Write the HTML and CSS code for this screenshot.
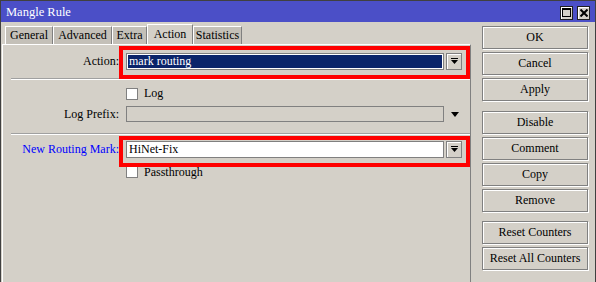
FILE: index.html
```html
<!DOCTYPE html>
<html lang="en">
<head>
    <meta charset="UTF-8">
    <meta name="viewport" content="width=device-width, initial-scale=1.0">
    <title>Mangle Rule</title>
    <link rel="stylesheet" href="styles.css">
</head>
<body>
    <div class="window">
        <div class="titlebar">
            <span class="title">Mangle Rule</span>
            <div class="wbtns">
                <span class="wbtn">
                    <svg width="9" height="9" viewBox="0 0 9 9"><rect x="0.5" y="0.5" width="8" height="8" fill="none" stroke="#000"/><rect x="0" y="0" width="9" height="2" fill="#000"/></svg>
                </span>
                <span class="wbtn">
                    <svg width="8" height="8" viewBox="0 0 8 8"><path d="M0.5 0.5 L7.5 7.5 M7.5 0.5 L0.5 7.5" stroke="#000" stroke-width="2"/></svg>
                </span>
            </div>
        </div>
        <div class="main">
            <div class="left">
                <div class="tabs">
                    <div class="tab t-general">General</div>
                    <div class="tab t-advanced">Advanced</div>
                    <div class="tab t-extra">Extra</div>
                    <div class="tab t-action active">Action</div>
                    <div class="tab t-stats">Statistics</div>
                </div>
                <div class="panel">
                    <div class="row r-action">
                        <span class="lbl">Action:</span>
                        <div class="field sel">mark routing</div>
                        <span class="dd">
                            <svg width="7" height="7" viewBox="0 0 7 7"><rect x="0" y="0" width="7" height="1" fill="#000"/><polygon points="0,2 7,2 3.5,6" fill="#000"/></svg>
                        </span>
                    </div>
                    <div class="sep"></div>
                    <div class="row r-log">
                        <span class="lbl"></span>
                        <span class="chk"><span class="box"></span>Log</span>
                    </div>
                    <div class="row r-prefix">
                        <span class="lbl">Log Prefix:</span>
                        <div class="field off"></div>
                        <span class="tri"></span>
                    </div>
                    <div class="sep"></div>
                    <div class="row r-mark">
                        <span class="lbl blue">New Routing Mark:</span>
                        <div class="field">HiNet-Fix</div>
                        <span class="dd">
                            <svg width="7" height="7" viewBox="0 0 7 7"><rect x="0" y="0" width="7" height="1" fill="#000"/><polygon points="0,2 7,2 3.5,6" fill="#000"/></svg>
                        </span>
                    </div>
                    <div class="row r-pass">
                        <span class="lbl"></span>
                        <span class="chk"><span class="box"></span>Passthrough</span>
                    </div>

                    <!-- red highlight marks -->
                    <div class="hl hl1"></div>
                    <div class="hl hl2"></div>
                </div>
            </div>
            <div class="buttons">
                <div class="group">
                    <div class="btn">OK</div>
                    <div class="btn">Cancel</div>
                    <div class="btn">Apply</div>
                </div>
                <div class="group">
                    <div class="btn">Disable</div>
                    <div class="btn">Comment</div>
                    <div class="btn">Copy</div>
                    <div class="btn">Remove</div>
                </div>
                <div class="group">
                    <div class="btn">Reset Counters</div>
                    <div class="btn">Reset All Counters</div>
                </div>
            </div>
        </div>
    </div>
</body>
</html>
```

FILE: styles.css
```css
body{
    margin: 0;
    padding: 0;
    background-color: #d4d0c8;
    font-family: "Liberation Serif", serif;
    font-size: 12px;
    color: black;
}
.window{
    width: 596px;
    height: 282px;
    box-sizing: border-box;
    border: 1px solid #404040;
    border-bottom: none;
    background-color: #d4d0c8;
    display: flex;
    flex-direction: column;
    overflow: hidden;
}
.titlebar{
    height: 21px;
    flex-shrink: 0;
    background-color: #4b4fc7;
    color: white;
    display: flex;
    align-items: center;
    justify-content: space-between;
    padding: 0 5px 0 5px;
}
.title{
    font-size: 12.5px;
    padding-top: 2px;
}
.wbtns{
    display: flex;
    gap: 4px;
    padding-top: 2px;
}
.wbtn{
    width: 13px;
    height: 14px;
    box-sizing: border-box;
    border: 1px solid #202020;
    background-color: #d4d0c8;
    box-shadow: inset 1px 1px 0 #fff;
    display: flex;
    align-items: center;
    justify-content: center;
}
.main{
    flex: 1;
    display: flex;
    padding-left: 1px;
}
.left{
    width: 469px;
    display: flex;
    flex-direction: column;
}
.tabs{
    height: 22px;
    display: flex;
    align-items: flex-end;
    padding-left: 3px;
}
.tab{
    height: 18px;
    box-sizing: border-box;
    text-align: center;
    line-height: 17px;
    background-color: #c4c0b8;
    border: 1px solid #fff;
    border-bottom: none;
    border-right-color: #808080;
}
.t-general{ width: 48px; }
.t-advanced{ width: 59px; }
.t-extra{ width: 35px; }
.t-action{ width: 46px; }
.t-stats{ width: 49px; }
.tab.active{
    height: 21px;
    line-height: 19px;
    background-color: #d4d0c8;
    position: relative;
    top: 1px;
}
.panel{
    flex: 1;
    position: relative;
    border-top: 1px solid #fff;
    border-left: 1px solid #fff;
    border-right: 1px solid #808080;
    display: flex;
    flex-direction: column;
}
.row{
    display: flex;
    align-items: center;
}
.lbl{
    width: 116px;
    text-align: right;
    flex-shrink: 0;
}
.lbl.blue{
    color: #0000ff;
}
.field{
    width: 318px;
    height: 17px;
    box-sizing: border-box;
    margin-left: 7px;
    border: 1px solid #808080;
    background-color: white;
    padding-left: 2px;
    line-height: 15px;
}
.field.sel{
    background-color: #0a246a;
    color: white;
    box-shadow: inset 0 0 0 1px #fff;
}
.field.off{
    height: 16px;
    background-color: #d4d0c8;
}
.dd{
    width: 16px;
    height: 17px;
    box-sizing: border-box;
    margin-left: 2px;
    border: 1px solid #808080;
    box-shadow: inset 1px 1px 0 #fff;
    display: flex;
    align-items: center;
    justify-content: center;
}
.tri{
    margin-left: 7px;
    width: 0;
    height: 0;
    border-left: 4px solid transparent;
    border-right: 4px solid transparent;
    border-top: 5px solid #000;
}
.sep{
    margin-left: 8px;
    border-top: 1px solid #a0a0a0;
    border-bottom: 1px solid #fff;
}
.chk{
    display: flex;
    align-items: center;
    margin-left: 7px;
}
.box{
    width: 12px;
    height: 12px;
    box-sizing: border-box;
    border: 1px solid #808080;
    background-color: white;
    margin-right: 6px;
}
.r-action{
    margin-top: 8px;
}
.r-action + .sep{
    margin-top: 8px;
}
.r-log{
    margin-top: 7px;
    height: 13px;
}
.r-prefix{
    margin-top: 6px;
}
.r-prefix + .sep{
    margin-top: 11px;
}
.r-mark{
    margin-top: 6px;
}
.r-pass{
    margin-top: 8px;
    height: 12px;
}
.hl{
    position: absolute;
    left: 116px;
    width: 351px;
    box-sizing: border-box;
    border: 4px solid #ff0000;
}
.hl1{
    top: 1px;
    height: 33px;
}
.hl2{
    top: 91px;
    height: 31px;
}
.buttons{
    margin-left: 11px;
    padding-top: 4px;
    display: flex;
    flex-direction: column;
    gap: 10px;
}
.group{
    display: flex;
    flex-direction: column;
    gap: 3px;
}
.group + .group + .group{
    margin-top: -1px;
}
.btn{
    width: 106px;
    height: 23px;
    box-sizing: border-box;
    border: 1px solid #808080;
    box-shadow: inset 1px 1px 0 #fff, 1px 1px 0 #fff;
    text-align: center;
    line-height: 21px;
}
```
